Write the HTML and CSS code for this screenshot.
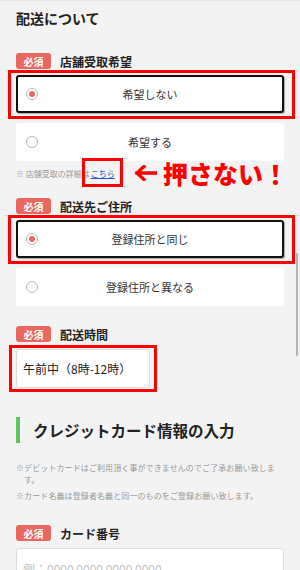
FILE: index.html
```html
<!DOCTYPE html>
<html lang="ja">
<head>
<meta charset="utf-8">
<link rel="stylesheet" href="styles.css">
</head>
<body>
<div class="page">
  <h1 class="title">配送について</h1>

  <section class="sec sec-first">
    <div class="label-row"><span class="badge">必須</span><span class="label">店舗受取希望</span></div>
    <div class="options">
      <div class="option selected"><span class="radio on"></span><span class="opt-text">希望しない</span><span class="mark mark-opt"></span></div>
      <div class="option"><span class="radio"></span><span class="opt-text">希望する</span></div>
    </div>
    <p class="note">※ 店舗受取の詳細は<a class="link">こちら<span class="mark mark-link"></span></a><span class="callout"><svg class="arrow" width="24" height="16" viewBox="0 0 24 16"><path d="M23 8H4M11 1.5L4 8l7 6.5" fill="none" stroke="#ff0000" stroke-width="3.4" stroke-linecap="square"/></svg>押さない！</span></p>
  </section>

  <section class="sec sec-second">
    <div class="label-row"><span class="badge">必須</span><span class="label">配送先ご住所</span></div>
    <div class="options">
      <div class="option selected"><span class="radio on"></span><span class="opt-text">登録住所と同じ</span><span class="mark mark-opt2"></span></div>
      <div class="option"><span class="radio"></span><span class="opt-text">登録住所と異なる</span></div>
    </div>
  </section>

  <section class="sec sec-third">
    <div class="label-row"><span class="badge">必須</span><span class="label">配送時間</span></div>
    <div class="select">午前中（8時-12時）<span class="mark mark-select"></span></div>
  </section>

  <h2 class="heading">クレジットカード情報の入力</h2>
  <div class="notes">
    <p class="small">※デビットカードはご利用頂く事ができませんのでご了承お願い致します。</p>
    <p class="small">※カード名義は登録者名義と同一のものをご登録お願い致します。</p>
  </div>

  <section class="sec sec-card">
    <div class="label-row"><span class="badge">必須</span><span class="label">カード番号</span></div>
    <div class="input">例：0000 0000 0000 0000</div>
  </section>
</div>
<div class="scrollbar"></div>
</body>
</html>
```

FILE: styles.css
```css
html, body {
  margin: 0;
  padding: 0;
}
body {
  background: #f3f3f3;
  font-family: "Noto Sans CJK JP", "Noto Sans", sans-serif;
  color: #222;
  width: 300px;
  height: 570px;
  overflow: hidden;
  position: relative;
}
.page {
  padding: 0 16px;
  border-top: 1px solid #e6e6e6;
}
.title {
  margin: 0;
  padding-top: 7px;
  font-size: 14px;
  line-height: 20px;
  font-weight: bold;
  color: #222;
}
.sec-first { margin-top: 25px; }
.sec-second { margin-top: 17px; }
.sec-third { margin-top: 20px; }
.sec-card { margin-top: 23px; }

.label-row {
  display: flex;
  align-items: center;
  height: 16px;
}
.badge {
  display: inline-flex;
  align-items: center;
  justify-content: center;
  width: 35px;
  height: 16px;
  border-radius: 3px;
  background: #e8675f;
  color: #fff;
  font-size: 10px;
  font-weight: bold;
}
.label {
  margin-left: 9px;
  font-size: 12px;
  font-weight: bold;
  color: #222;
}
.options {
  margin-top: 6px;
  display: flex;
  flex-direction: column;
  gap: 10px;
}
.option {
  position: relative;
  height: 38px;
  background: #fff;
  border-radius: 3px;
  display: flex;
  align-items: center;
  box-sizing: border-box;
  padding-left: 10px;
}
.option.selected {
  border: 2px solid #111;
  padding-left: 8px;
  box-shadow: 1px 1px 1px rgba(0,0,0,0.3);
}
.radio {
  width: 12px;
  height: 12px;
  box-sizing: border-box;
  border: 1px solid #b8b8b8;
  border-radius: 50%;
  display: flex;
  align-items: center;
  justify-content: center;
  flex: none;
}
.radio.on::after {
  content: "";
  width: 6px;
  height: 6px;
  border-radius: 50%;
  background: #e8675f;
}
.opt-text {
  position: absolute;
  left: 0;
  right: 0;
  text-align: center;
  font-size: 11px;
  color: #333;
}
.mark {
  position: absolute;
  border: 3px solid #ff0000;
  pointer-events: none;
}
.mark-opt { top: -7px; left: -10px; right: -13px; bottom: -8px; }
.mark-opt2 { top: -7px; left: -10px; right: -13px; bottom: -8px; }
.mark-select { top: -5px; left: -8px; right: -8px; bottom: -5px; }
.mark-link { top: -10px; left: -9px; right: -8px; bottom: -8px; }

.note {
  position: relative;
  margin: 6px 0 0;
  font-size: 8px;
  line-height: 14px;
  color: #999;
}
.link {
  position: relative;
  margin-left: 1px;
  color: #2255cc;
  text-decoration: underline;
  font-size: 8px;
}
.callout {
  position: absolute;
  left: 117px;
  top: -9px;
  display: flex;
  align-items: center;
  font-size: 25px;
  line-height: 30px;
  font-weight: 900;
  color: #ff0000;
  white-space: nowrap;
}
.arrow {
  margin-right: 6px;
  flex: none;
}
.select {
  position: relative;
  margin-top: 7px;
  width: 134px;
  height: 39px;
  box-sizing: border-box;
  background: #fff;
  border: 1px solid #ddd;
  border-radius: 3px;
  display: flex;
  align-items: center;
  padding-left: 6px;
  font-size: 12px;
  color: #222;
}
.heading {
  margin: 29px 0 0;
  height: 26px;
  border-left: 4px solid #5cc460;
  padding-left: 13px;
  display: flex;
  align-items: center;
  font-size: 15.5px;
  font-weight: bold;
  color: #222;
}
.notes {
  margin-top: 19px;
  padding-right: 8px;
}
.small {
  margin: 0 0 4px;
  font-size: 8px;
  line-height: 12px;
  letter-spacing: 0.1px;
  color: #999;
  padding-left: 8px;
  text-indent: -8px;
}
.input {
  margin-top: 7px;
  height: 40px;
  box-sizing: border-box;
  background: #fff;
  border: 1px solid #ddd;
  border-radius: 3px;
  display: flex;
  align-items: center;
  padding-left: 6px;
  font-size: 12px;
  color: #c4c4c4;
}
.scrollbar {
  position: absolute;
  left: 296px;
  top: 253px;
  width: 2px;
  height: 103px;
  background: #b4b4b4;
  border-radius: 1px;
}
```
